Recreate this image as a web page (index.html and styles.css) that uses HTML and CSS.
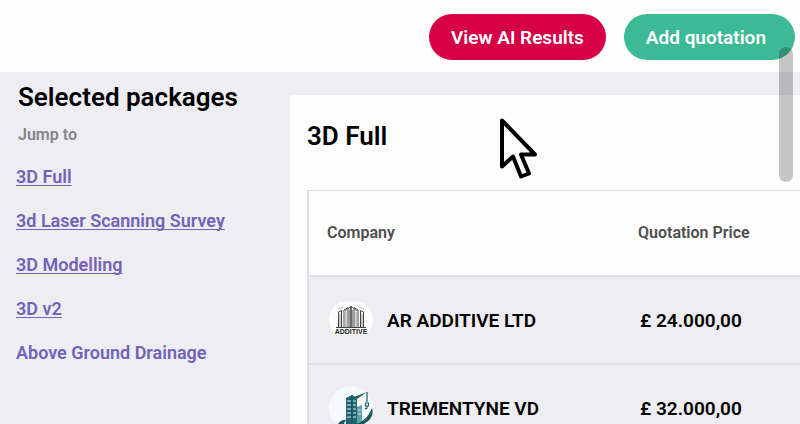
FILE: index.html
```html
<!DOCTYPE html>
<html lang="en">
<head>
    <meta charset="UTF-8">
    <title>Selected packages</title>
    <meta name="viewport" content="width=device-width, initial-scale=1">
    <link rel="stylesheet" href="styles.css">
</head>
<body>
    <header class="topbar">
        <button type="button" class="btn btn-results">View AI Results</button>
        <button type="button" class="btn btn-add">Add quotation</button>
    </header>
    <div class="layout">
        <aside class="sidebar">
            <h1 class="sidebar-title">Selected packages</h1>
            <p class="sidebar-hint">Jump to</p>
            <nav class="jump-list">
                <a href="#full">3D Full</a>
                <a href="#survey">3d Laser Scanning Survey</a>
                <a href="#modelling">3D Modelling</a>
                <a href="#v2">3D v2</a>
                <a href="#drainage" class="plain">Above Ground Drainage</a>
            </nav>
        </aside>
        <main class="panel" id="full">
            <h2 class="panel-title">3D Full</h2>
            <table class="quotes">
                <thead>
                    <tr>
                        <th class="col-company">Company</th>
                        <th>Quotation Price</th>
                    </tr>
                </thead>
                <tbody>
                    <tr>
                        <td>
                            <div class="company">
                                <svg class="logo" viewBox="0 0 44 44" aria-hidden="true">
                                    <path d="M11 4h22q11 7 11 18 0 9-7 15H7Q0 31 0 22 0 11 11 4z" fill="#fdfdfd"/>
                                    <g fill="none" stroke="#444" stroke-width="1">
                                        <path d="M7 29.500h30"/>
                                        <path d="M9.500 29V14l3-1.500V29M15 29V12l4-2.500V29M25 29V9.500l4 2.500v17M31.500 29V12.500l3 1.500v15"/>
                                        <path d="M16 13l6-4.500 6 4.500" stroke="#666"/>
                                        <path d="M22 8v21" stroke-width="1.600"/>
                                        <path d="M11 29V16M17 29V14M20.500 29V12M23.500 29V12M27 29V14M33 29V16" stroke="#999"/>
                                        <path d="M9 11l5-2M30 9l5 2" stroke="#bbb"/>
                                    </g>
                                    <text class="logo-text" x="22" y="36" text-anchor="middle">ADDITIVE</text>
                                </svg>
                                <span>AR ADDITIVE LTD</span>
                            </div>
                        </td>
                        <td>£ 24.000,00</td>
                    </tr>
                    <tr>
                        <td>
                            <div class="company">
                                <svg class="logo" viewBox="0 0 44 44" aria-hidden="true">
                                    <circle cx="22" cy="22" r="22" fill="#f5fafa"/>
                                    <path d="M17 38V12l6-3 5 3v26z" fill="#1f6673"/>
                                    <path d="M28 38V21l5-2v19z" fill="#5fa0a8"/>
                                    <path d="M18 15h4M18 19h4M18 23h4M18 27h4M18 31h4M24 15h3M24 19h3M24 23h3M24 27h3M24 31h3M29 24h3M29 28h3" stroke="#d5e9ea" stroke-width="1.200"/>
                                    <path d="M23 38V9" stroke="#174d58"/>
                                    <path d="M25 11L38 6l-10 7z" fill="#245966"/>
                                    <path d="M38 6v10M36.500 17h3v3h-3zM38 20v2q-1 2-2 0" fill="none" stroke="#245966" stroke-width="1.200"/>
                                    <path d="M9 38q4-5 8-4l-3 5q22 2 29-17 3 10-8 16-14 7-26 0z" fill="#1d5661"/>
                                </svg>
                                <span>TREMENTYNE VD</span>
                            </div>
                        </td>
                        <td>£ 32.000,00</td>
                    </tr>
                </tbody>
            </table>
        </main>
    </div>
    <div class="scroll-thumb"></div>
    <svg class="pointer" viewBox="0 0 40 62" aria-hidden="true">
        <path d="M3 3.500v46l11-10 8 20 8-3-8-19h14z" fill="#fdfdfd" stroke="#000" stroke-width="4" stroke-linejoin="round"/>
    </svg>
</body>
</html>
```
FILE: styles.css
```css
* {
    box-sizing: border-box;
}
body {
    position: relative;
    display: flex;
    flex-direction: column;
    height: 100vh;
    margin: 0;
    overflow: hidden;
    background: #eeedf2;
    color: #000;
    font-family: Roboto, Arial, sans-serif;
    font-weight: 600;
}
.topbar {
    display: flex;
    justify-content: flex-end;
    gap: 18px;
    padding: 14px 5px 12px;
    background: #fdfdfd;
}
.btn {
    height: 46px;
    padding: 2px 22px 0;
    border: 0;
    border-radius: 23px;
    color: #fff;
    font-family: inherit;
    font-size: 19px;
    font-weight: 600;
    line-height: 24px;
    cursor: pointer;
}
.btn-results {
    background: #d50045;
}
.btn-add {
    padding-right: 29px;
    background: #3cb995;
}
.layout {
    display: flex;
    flex: 1;
    min-height: 0;
}
.sidebar {
    flex: 0 0 290px;
    padding: 9px 16px;
}
.sidebar-title,
.panel-title {
    margin: 0;
    font-size: 26px;
    font-weight: 600;
    line-height: 32px;
}
.sidebar-title {
    padding-left: 2px;
}
.sidebar-hint {
    margin: 10px 0 18px;
    padding-left: 2px;
    color: #858488;
    font-size: 16px;
    line-height: 24px;
}
.jump-list {
    display: flex;
    flex-direction: column;
    align-items: flex-start;
    gap: 20px;
}
.jump-list a {
    color: #7262b8;
    font-size: 18px;
    line-height: 24px;
    text-decoration: underline;
    text-decoration-thickness: 1px;
    text-decoration-skip-ink: none;
    text-underline-offset: 2px;
}
.jump-list .plain {
    text-decoration: none;
}
.panel {
    flex: 1;
    min-width: 0;
    margin-top: 23px;
    padding: 25px 0 0 17px;
    background: #fdfdfd;
}
.quotes {
    width: 100%;
    margin-top: 38px;
    border-top: 1px solid #dcdae6;
    border-left: 2px solid #dfddea;
    border-spacing: 0;
    text-align: left;
}
.quotes th {
    height: 84px;
    padding: 0 0 2px 18px;
    color: #4d4d4f;
    font-size: 16px;
    font-weight: 600;
}
.quotes .col-company {
    width: 311px;
}
.quotes td {
    height: 88px;
    padding: 0 0 0 20px;
    border-top: 2px solid #e0def1;
    background: #eeedf2;
    font-size: 19px;
}
.company {
    display: flex;
    align-items: center;
    gap: 14px;
}
.logo {
    width: 44px;
    height: 44px;
}
.logo-text {
    fill: #222;
    font-family: "Liberation Sans", Arial, sans-serif;
    font-size: 7px;
    font-weight: 700;
}
.scroll-thumb {
    position: absolute;
    top: 47px;
    right: 7px;
    width: 14px;
    height: 135px;
    border-radius: 7px;
    background: rgba(0, 0, 0, 0.22);
}
.pointer {
    position: absolute;
    top: 117px;
    left: 499px;
    width: 40px;
    height: 62px;
}
```
